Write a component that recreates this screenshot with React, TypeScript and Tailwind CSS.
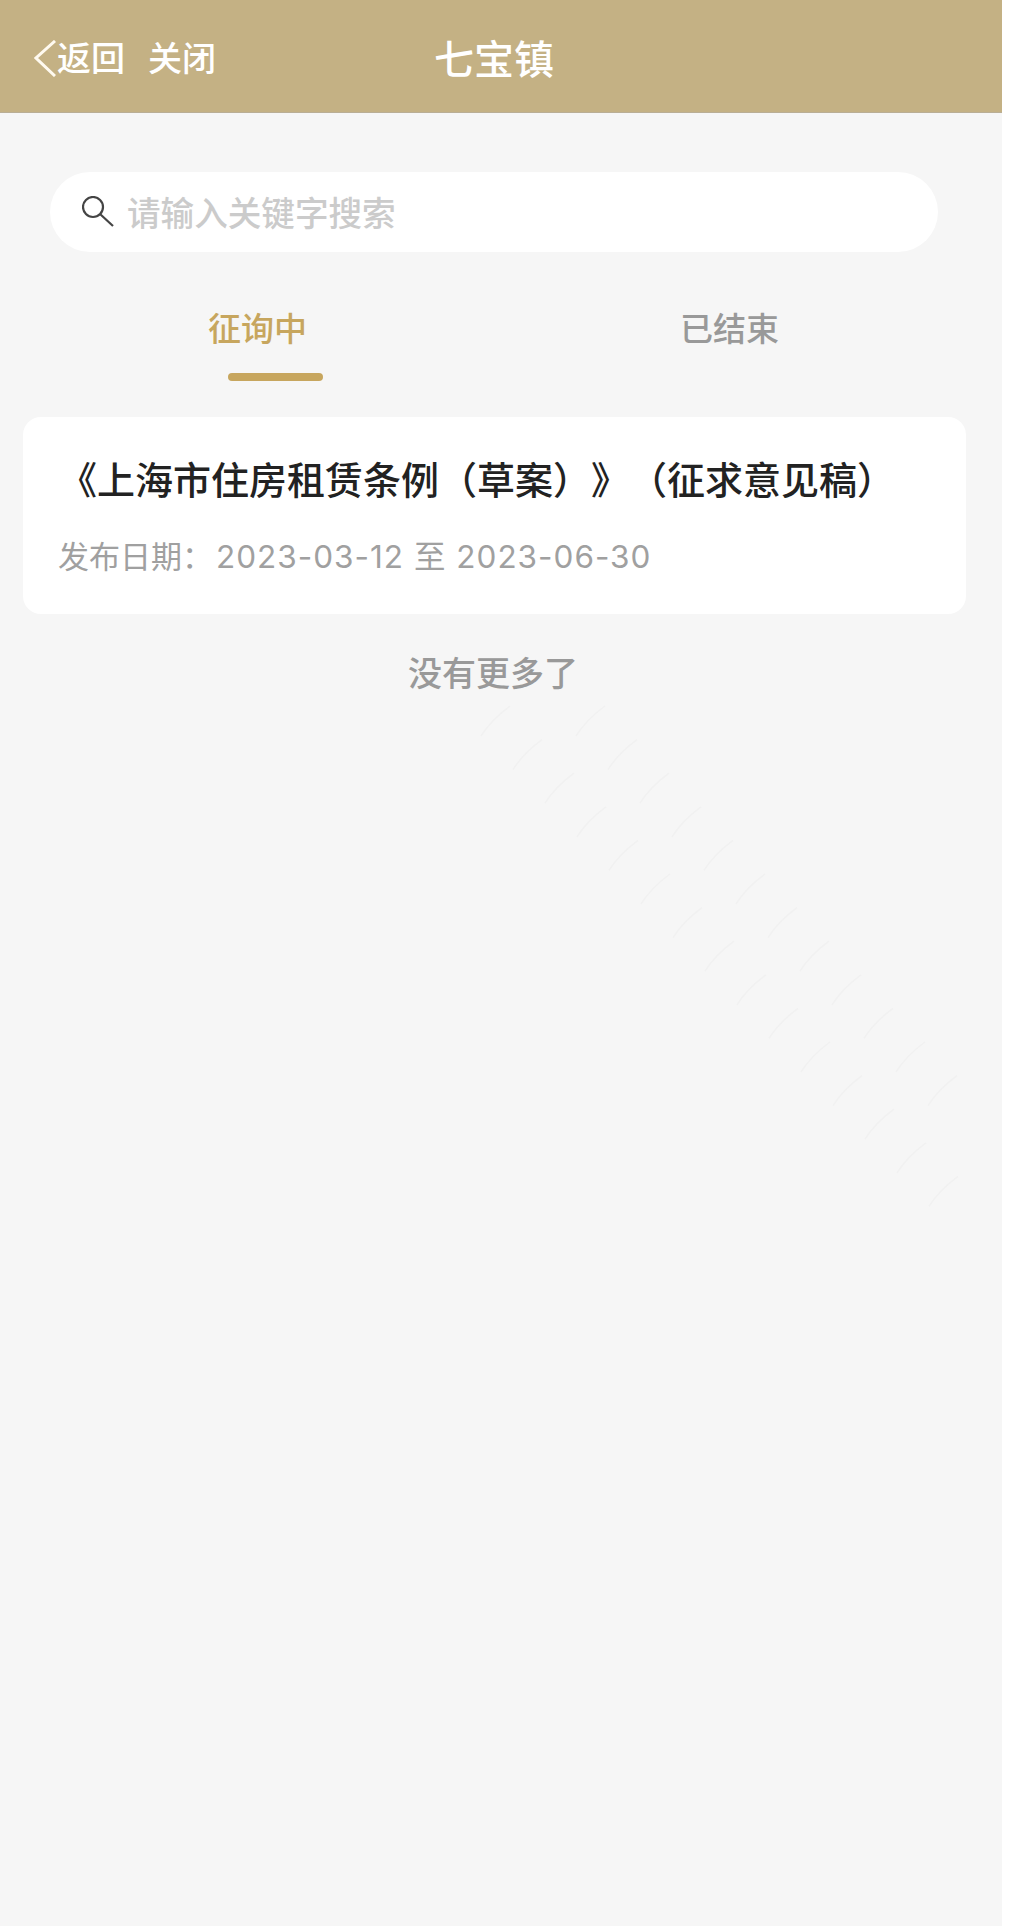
const strokes = [
  ...Array.from({ length: 15 }, (_, i) => ({ x: 481 + i * 32, y: 736 + i * 33.6 })),
  ...Array.from({ length: 12 }, (_, i) => ({ x: 576 + i * 32, y: 736 + i * 33.6 })),
];

export default function App() {
  return (
    <div className="w-[1021px] h-[1926px] bg-white font-['Noto_Sans_CJK_SC',sans-serif]">
      <div className="relative w-[1002px] h-[1926px] bg-[#f6f6f6] overflow-hidden">
        {/* watermark */}
        <svg className="absolute left-0 top-0 pointer-events-none" width="1002" height="1926" fill="none">
          {strokes.map((s, i) => (
            <path key={i} d={`M${s.x} ${s.y}q10-16 29-30`} stroke="#f1f1f1" strokeWidth="1.5" />
          ))}
        </svg>

        <div className="relative">
          {/* header */}
          <div className="h-[113px] bg-[#c4b184] border-b border-[#b9ae96] flex items-center pl-[34px] text-white">
            <svg width="22" height="37" viewBox="0 0 22 37" fill="none" stroke="#fffaf0" strokeWidth="3" className="mt-[5px]">
              <polyline points="21,1 2,18 21,36" />
            </svg>
            <span className="ml-[1px] mt-[2px] text-[34px] leading-[40px] font-medium">返回</span>
            <span className="ml-[23px] mt-[2px] text-[34px] leading-[40px] font-medium">关闭</span>
            <span className="ml-[218px] mt-[2px] text-[40px] leading-[48px] font-medium">七宝镇</span>
          </div>

          {/* search */}
          <div className="ml-[50px] mt-[59px] w-[888px] h-[80px] rounded-full bg-white flex items-center pl-[32px]">
            <svg width="33" height="32" viewBox="0 0 33 32" fill="none" stroke="#444444" strokeWidth="2.2">
              <circle cx="11" cy="11" r="10" />
              <line x1="18" y1="18" x2="31" y2="30" />
            </svg>
            <span className="ml-[12px] text-[33.6px] leading-[40px] font-medium text-[#cbcbcb]">请输入关键字搜索</span>
          </div>

          {/* tabs */}
          <div className="mt-[55px] pl-[208px] flex items-start">
            <div className="w-[472px] flex flex-col items-start">
              <span className="text-[33px] leading-[40px] font-medium text-[#c7a65e]">征询中</span>
              <div className="ml-[20px] mt-[26px] w-[95px] h-[8px] rounded-full bg-[#c7a65e]" />
            </div>
            <span className="text-[33px] leading-[40px] font-medium text-[#999999]">已结束</span>
          </div>

          {/* list */}
          <div className="ml-[23px] mt-[36px] w-[943px] h-[197px] rounded-[18px] bg-white pl-[36px] pt-[36px]">
            <p className="text-[38px] leading-[50px] font-medium text-[#222222] whitespace-nowrap [text-spacing-trim:space-all]">《上海市住房租赁条例（草案）》（征求意见稿）</p>
            <p className="mt-[32px] -ml-[1px] text-[31px] leading-[40px] text-[#a0a0a0] [text-spacing-trim:space-all]">
              发布日期：<span className="ml-[3px] tracking-[1px] font-['Inter','Noto_Sans_CJK_SC',sans-serif] text-[31.5px]">2023-03-12 至 2023-06-30</span>
            </p>
          </div>

          <p className="ml-[24px] mt-[38px] w-[938px] text-center text-[34px] leading-[40px] font-medium text-[#999999]">没有更多了</p>
        </div>
      </div>
    </div>
  );
}
